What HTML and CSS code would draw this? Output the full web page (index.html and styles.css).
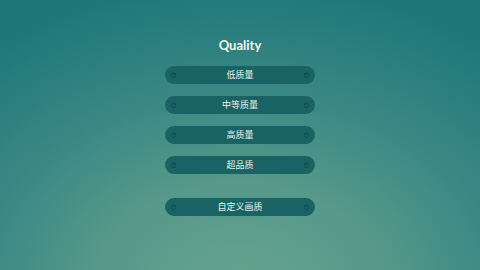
FILE: index.html
```html
<!DOCTYPE html>
<html lang="zh">
<head>
    <meta charset="UTF-8">
    <meta name="viewport" content="width=device-width, initial-scale=1.0">
    <title>Quality</title>
    <link rel="stylesheet" href="styles.css">
</head>
<body>
    <div class="menu">
        <h1 class="title">Quality</h1>

        <div class="options">
            <button class="option">
                <svg class="curl" viewBox="0 0 10 10"><path d="M7 3.2A3 3 0 1 0 7.6 6.4M5 5a1.2 1.2 0 1 1 1.6 .4"/></svg>
                <span>低质量</span>
                <svg class="curl flip" viewBox="0 0 10 10"><path d="M7 3.2A3 3 0 1 0 7.6 6.4M5 5a1.2 1.2 0 1 1 1.6 .4"/></svg>
            </button>
            <button class="option">
                <svg class="curl" viewBox="0 0 10 10"><path d="M7 3.2A3 3 0 1 0 7.6 6.4M5 5a1.2 1.2 0 1 1 1.6 .4"/></svg>
                <span>中等质量</span>
                <svg class="curl flip" viewBox="0 0 10 10"><path d="M7 3.2A3 3 0 1 0 7.6 6.4M5 5a1.2 1.2 0 1 1 1.6 .4"/></svg>
            </button>
            <button class="option">
                <svg class="curl" viewBox="0 0 10 10"><path d="M7 3.2A3 3 0 1 0 7.6 6.4M5 5a1.2 1.2 0 1 1 1.6 .4"/></svg>
                <span>高质量</span>
                <svg class="curl flip" viewBox="0 0 10 10"><path d="M7 3.2A3 3 0 1 0 7.6 6.4M5 5a1.2 1.2 0 1 1 1.6 .4"/></svg>
            </button>
            <button class="option">
                <svg class="curl" viewBox="0 0 10 10"><path d="M7 3.2A3 3 0 1 0 7.6 6.4M5 5a1.2 1.2 0 1 1 1.6 .4"/></svg>
                <span>超品质</span>
                <svg class="curl flip" viewBox="0 0 10 10"><path d="M7 3.2A3 3 0 1 0 7.6 6.4M5 5a1.2 1.2 0 1 1 1.6 .4"/></svg>
            </button>
        </div>

        <button class="option custom">
            <svg class="curl" viewBox="0 0 10 10"><path d="M7 3.2A3 3 0 1 0 7.6 6.4M5 5a1.2 1.2 0 1 1 1.6 .4"/></svg>
            <span>自定义画质</span>
            <svg class="curl flip" viewBox="0 0 10 10"><path d="M7 3.2A3 3 0 1 0 7.6 6.4M5 5a1.2 1.2 0 1 1 1.6 .4"/></svg>
        </button>
    </div>
</body>
</html>
```

FILE: styles.css
```css
* {
    margin: 0;
    padding: 0;
    box-sizing: border-box;
}

html, body {
    height: 100%;
}

body {
    font-family: "Open Sans", "Noto Sans CJK SC", sans-serif;
    color: #eef5f0;
    background-color: #3f8a82;
    background-image: radial-gradient(ellipse 85% 115% at 50% 108%, #66a48e 0%, #56998a 35%, #358583 70%, #1f7779 100%);
    display: flex;
    justify-content: center;
    overflow: hidden;
}

.menu {
    width: 150px;
    padding-top: 37px;
    display: flex;
    flex-direction: column;
    align-items: center;
}

.title {
    font-family: "Lato", "Open Sans", sans-serif;
    font-size: 13px;
    font-weight: 700;
    line-height: 17px;
    margin-bottom: 12px;
    color: #f2f6ee;
}

.options {
    width: 100%;
    display: flex;
    flex-direction: column;
    gap: 12px;
}

.option {
    width: 100%;
    height: 18px;
    border: none;
    border-radius: 9px;
    background-color: #1a6364;
    color: #e8f1ec;
    font-family: "Noto Sans CJK SC", sans-serif;
    font-size: 9px;
    display: flex;
    align-items: center;
    justify-content: space-between;
    padding: 0 5px;
    cursor: pointer;
}

.option span {
    line-height: 18px;
}

.custom {
    margin-top: 24px;
}

.curl {
    width: 8px;
    height: 8px;
    fill: none;
    stroke: #0f4a4c;
    stroke-width: 1.1;
    stroke-linecap: round;
}

.curl.flip {
    transform: scaleX(-1);
}
```
